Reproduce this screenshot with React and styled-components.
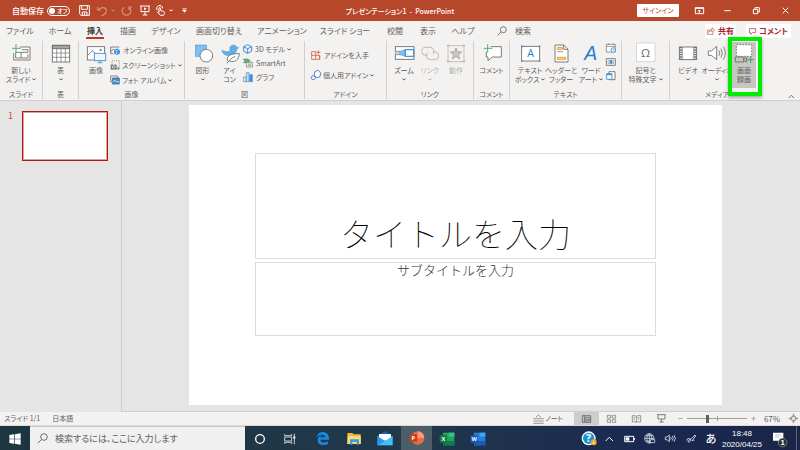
import React from "react";
import styled, { createGlobalStyle, css } from "styled-components";

const GlobalStyle = createGlobalStyle`
  *, *::before, *::after { box-sizing: border-box; }
  body {
    margin: 0;
    font-family: "Noto Sans CJK JP", "Noto Sans", sans-serif;
    font-feature-settings: "palt";
    font-size: 7px;
    line-height: 9px;
    color: #605e5c;
    background: #e5e5e5;
  }
  button, input { font: inherit; font-feature-settings: inherit; color: inherit; }
  button { border: 0; padding: 0; background: none; white-space: nowrap; }
  svg { display: block; flex: none; overflow: visible; }
`;

const Page = styled.div`
  min-height: 100vh;
  display: flex;
  flex-direction: column;
`;

/* ---------- title bar ---------- */
const TitleBar = styled.header`
  display: grid;
  grid-template-columns: 1fr auto 1fr;
  align-items: center;
  height: 21px;
  background: #b7472a;
  color: #fff;
`;
const QuickAccess = styled.div`
  display: flex;
  align-items: center;
  padding-left: 12px;
`;
const AutoSave = styled.label`
  display: flex;
  align-items: center;
  gap: 3px;
  margin-right: 5px;
  font-size: 8px;
  font-weight: 500;
`;
const Pill = styled.span`
  display: flex;
  align-items: center;
  gap: 2px;
  width: 23px;
  height: 10px;
  padding-left: 1px;
  border: 1px solid #fff;
  border-radius: 5px;
  font-size: 6px;
  line-height: 8px;
  white-space: nowrap;
`;
const Knob = styled.input`
  appearance: none;
  flex: none;
  width: 6px;
  height: 6px;
  margin: 0;
  border-radius: 50%;
  background: #fff;
`;
const QuickButton = styled.button`
  display: grid;
  place-items: center;
  width: ${(p) => p.$w}px;
  height: 16px;
  opacity: ${(p) => (p.disabled ? 0.4 : 1)};
  color: #fff;
`;
const DocTitle = styled.h1`
  margin: 0;
  font-size: 7px;
  line-height: 10px;
  font-weight: 500;
`;
const WindowTools = styled.div`
  display: flex;
  align-items: center;
  justify-content: flex-end;
`;
const SignIn = styled.button`
  width: 42px;
  height: 13px;
  margin-right: 6px;
  border-radius: 1px;
  background: #fff;
  color: #b7472a;
`;

/* ---------- ribbon tabs ---------- */
const TabBar = styled.nav`
  display: flex;
  align-items: center;
  height: 20px;
  padding-right: 9px;
  background: #f3f2f1;
  font-size: 8px;
  line-height: 10px;
`;
const Tab = styled.button`
  position: relative;
  width: ${(p) => p.$w}px;
  height: 20px;
  ${(p) =>
    p.$active &&
    css`
      color: #3b3a39;
      font-weight: 700;
      &::after {
        content: "";
        position: absolute;
        left: 6px;
        right: 6px;
        bottom: 2px;
        height: 2px;
        background: #b83a32;
      }
    `}
`;
const TellMe = styled.label`
  display: flex;
  align-items: center;
  gap: 8px;
  flex: 1;
  padding-left: 15px;
`;
const BareInput = styled.input`
  flex: 1;
  min-width: 0;
  padding: 0;
  border: 0;
  outline: 0;
  background: none;
  &::placeholder { color: #605e5c; opacity: 1; }
`;
const ShareButton = styled.button`
  display: flex;
  align-items: center;
  justify-content: center;
  gap: 3px;
  width: ${(p) => p.$w}px;
  height: 14px;
  margin-left: 10px;
  border-radius: 1px;
  background: #fff;
  color: #a4262c;
  font-weight: 700;
`;

/* ---------- ribbon ---------- */
const Ribbon = styled.div`
  display: flex;
  height: 60px;
  background: #f3f2f1;
  border-bottom: 1px solid #d2d0ce;
`;
const Group = styled.section`
  display: flex;
  flex-direction: column;
  flex: none;
  width: ${(p) => p.$w}px;
  height: 58px;
  border-right: 1px solid ${(p) => (p.$last ? "transparent" : "#d2d0ce")};
`;
const GroupBody = styled.div`
  display: flex;
  flex: 1;
  padding: 1px 0 0 ${(p) => p.$pad || 0}px;
  justify-content: ${(p) => (p.$pad ? "flex-start" : "center")};
`;
const GroupLabel = styled.div`
  height: 9px;
  text-align: center;
`;
const BigButton = styled.button`
  position: relative;
  display: flex;
  flex-direction: column;
  align-items: center;
  width: ${(p) => p.$w}px;
  height: 46px;
  padding-top: 1px;
  background: ${(p) => (p.$pressed ? "#c8c6c4" : "none")};
  color: ${(p) => (p.disabled ? "#b5b3b1" : "#605e5c")};
`;
const BigText = styled.span`
  display: flex;
  flex-direction: column;
  align-items: center;
  margin-top: 3px;
`;
const Line = styled.span`
  display: flex;
  align-items: center;
  justify-content: center;
  gap: 2px;
  height: 9px;
`;
const Column = styled.div`
  display: flex;
  flex-direction: column;
  gap: ${(p) => p.$gap}px;
  padding: ${(p) => p.$top}px 0 0 ${(p) => p.$indent || 0}px;
`;
const SmallButton = styled.button`
  display: flex;
  align-items: center;
  gap: ${(p) => (p.$tight ? 2 : 3)}px;
  height: 12px;
`;
const Highlight = styled.span`
  position: absolute;
  z-index: 2;
  inset: -5px -6px -8px -4px;
  border: 4px solid #00ec00;
  box-shadow: 0 2px 3px rgba(0, 0, 0, 0.3);
`;
const Collapse = styled.button`
  align-self: flex-end;
  margin: 0 5px 1px auto;
`;

/* ---------- workspace ---------- */
const Workspace = styled.main`
  display: flex;
  flex: 1;
  background: #e5e5e5;
`;
const Thumbs = styled.aside`
  display: flex;
  align-items: flex-start;
  width: 122px;
  padding: 10px 0 0 8px;
  border-right: 1px solid #cfcfcf;
  color: #c8452f;
  font-size: 9px;
  line-height: 10px;
`;
const Thumb = styled.button`
  width: 86px;
  height: 50px;
  margin-left: 9px;
  border: 1px solid #b01810;
  background: #fff;
  box-shadow: inset 0 0 0 1px #d9a59d;
`;
const Canvas = styled.div`
  flex: 1;
  padding: 4px 78px 6px 67px;
  border-bottom: 1px solid #cfcfcf;
`;
const Slide = styled.article`
  display: grid;
  grid-template-columns: 66fr 401fr 66fr;
  grid-template-rows: 48fr 106fr 3fr 74fr 69fr;
  aspect-ratio: 533 / 300;
  background: #fff;
  font-feature-settings: normal;
  text-align: center;
`;
const Placeholder = styled.div`
  grid-column: 2;
  grid-row: ${(p) => p.$row};
  display: flex;
  justify-content: center;
  align-items: ${(p) => (p.$row === 2 ? "flex-end" : "flex-start")};
  border: 1px solid #dcdcdc;
`;
const SlideTitle = styled.h2`
  margin: 0;
  font-size: 33px;
  line-height: 50px;
  font-weight: 100;
  color: #000;
`;
const SlideSubtitle = styled.p`
  margin: 0;
  font-size: 13px;
  line-height: 14px;
  font-weight: 300;
  color: #333;
`;

/* ---------- status bar ---------- */
const StatusBar = styled.footer`
  display: flex;
  align-items: center;
  height: 14px;
  padding-left: 4px;
  background: #f3f2f1;
  border-bottom: 1px solid #dcdad8;
  font-size: 7px;
`;
const StatusText = styled.span`
  margin-right: 12px;
`;
const Notes = styled.button`
  display: flex;
  align-items: center;
  gap: 1px;
  margin: 0 11px 0 auto;
`;
const ViewButton = styled.button`
  display: grid;
  place-items: center;
  width: 25px;
  height: 13px;
  background: ${(p) => (p.$active ? "#cfcdcb" : "none")};
`;
const FitButton = styled(ViewButton)`
  width: 12px;
  margin-right: 1px;
`;
const ZoomStep = styled.button`
  width: 13px;
  height: 12px;
  font-size: 9px;
  color: #8a8886;
`;
const ZoomRange = styled.input`
  appearance: none;
  width: 60px;
  height: 12px;
  margin: 0;
  background: linear-gradient(#a19f9d, #a19f9d) center / 100% 1px no-repeat,
    linear-gradient(#a19f9d, #a19f9d) center / 1px 5px no-repeat;
  &::-webkit-slider-thumb {
    appearance: none;
    width: 3px;
    height: 8px;
    background: #605e5c;
  }
`;
const ZoomValue = styled.button`
  width: 22px;
  margin: 0 4px 0 1px;
  font-size: 8px;
`;

/* ---------- taskbar ---------- */
const Taskbar = styled.footer`
  display: flex;
  align-items: stretch;
  height: 25px;
  background: linear-gradient(90deg, #1d3540, #20384a 50%, #1b2950 80%, #1a2548);
  color: #fff;
`;
const TaskButton = styled.button`
  display: grid;
  place-items: center;
  width: ${(p) => p.$w || 31}px;
  ${(p) =>
    p.$active &&
    css`
      background: #4b5e69;
      border-bottom: 1px solid #76b9ed;
    `}
`;
const SearchBox = styled.label`
  display: flex;
  align-items: center;
  gap: 7px;
  width: 215px;
  padding-left: 7px;
  background: #f0f0f0;
  border: 1px solid #c4c8ca;
  border-width: 1px 0;
  color: #444;
  font-size: 9px;
  line-height: 12px;
`;
const Tray = styled.div`
  display: flex;
  align-items: stretch;
  margin-left: auto;
`;
const TrayButton = styled.button`
  display: grid;
  place-items: center;
  width: ${(p) => p.$w || 20}px;
  color: #fff;
  font-size: 11px;
  font-weight: 500;
`;
const Clock = styled.time`
  display: flex;
  flex-direction: column;
  align-items: center;
  justify-content: center;
  width: 42px;
  font-family: "Liberation Sans", sans-serif;
  font-size: 8px;
  line-height: 11px;
`;
const Peek = styled.span`
  width: 4px;
  border-left: 1px solid #5a6480;
`;

/* ---------- drawings ---------- */
const G = "#6b6967";
const BLUE = "#3a8fd8";
const GREEN = "#3fa463";

/* Three drawing units make one pixel. */
const Art = ({ w = 20, h = 20, s = G, sw = 2.6, children }) => (
  <svg width={w} height={h} viewBox={`0 0 ${w * 3} ${h * 3}`} fill="none" stroke={s} strokeWidth={sw} aria-hidden="true">
    {children}
  </svg>
);
const Chevron = ({ up, c = "currentColor" }) => (
  <Art w={4} h={3} s={c} sw={3}>
    <path d={up ? "M1 7l5-5 5 5" : "M1 2l5 4 5-4"} />
  </Art>
);

const NewSlideArt = () => (
  <Art>
    <path d="M26 12H57V51H8V30" fill="#fff" />
    <path d="M32 20H51V28H14V45H51V34M30 30V45" />
    <path d="M3 16H30M15 3V29" stroke={GREEN} />
  </Art>
);
const TableArt = () => (
  <Art>
    <rect x="4" y="7" width="52" height="50" fill="#fff" />
    <path d="M4 7H56V17H4Z" fill="#a6a4a2" />
    <path d="M4 30H56M4 43H56M17 17V57M30 17V57M43 17V57" strokeWidth="2" />
  </Art>
);
const PictureArt = () => (
  <Art>
    <rect x="4" y="11" width="52" height="40" fill="#fff" />
    <path d="M4 38L19 23 32 36" />
    <circle cx="44" cy="21" r="3" fill={G} stroke="none" />
    <rect x="25" y="31" width="34" height="22" fill="#eef7ff" stroke={BLUE} />
    <path d="M42 53V59M35 59H49" stroke={BLUE} />
  </Art>
);
const ShapesArt = () => (
  <Art>
    <rect x="7" y="6" width="34" height="34" fill="#83beec" stroke={BLUE} strokeWidth="1.5" />
    <circle cx="40" cy="38" r="19" fill="#fff" />
  </Art>
);
const IconsArt = () => (
  <Art>
    <path d="M6 21C14 27 22 28 31 23 27 15 31 6 40 6 46 6 48 9 49 12L56 14 50 19C49 28 44 37 32 38 17 39 7 33 6 21Z" fill="#62aee8" stroke={BLUE} strokeWidth="1.5" />
    <path d="M23 54C18 39 31 31 58 32 56 50 45 60 28 54L20 60M28 54C33 46 39 43 46 40" fill="#fff" />
  </Art>
);
const ZoomArt = () => (
  <Art>
    <rect x="4" y="11" width="56" height="38" fill="#fff" />
    <path d="M4 25H18V35H4" fill="#b8dcf5" strokeWidth="2" />
    <path d="M18 25L34 20V40L18 35" fill="#83beec" stroke={BLUE} strokeWidth="1.5" />
    <rect x="34" y="20" width="25" height="20" fill="#fff" stroke={BLUE} strokeWidth="3.5" />
  </Art>
);
const LinkArt = () => (
  <Art s="#bcbab8" sw={3}>
    <path d="M22 37H17A12 12 0 0 1 17 13H31A12 12 0 0 1 39 33" />
    <path d="M38 26H44A12 12 0 0 1 44 50H31A12 12 0 0 1 23 29" />
  </Art>
);
const ActionArt = () => (
  <Art s="#bcbab8">
    <rect x="6" y="8" width="48" height="48" />
    <path d="M3 8H10M50 8H57M3 56H10M50 56H57" strokeWidth="5" />
    <path d="M30 15L34.500 26.500 47 27 37 35 41 48 30 40.500 19 48 23 35 13 27 25.500 26.500Z" fill="#c9c7c5" stroke="#a6a4a2" />
  </Art>
);
const CommentArt = () => (
  <Art>
    <path d="M26 11H58V42H31L18 53V42H13V26" fill="#fff" />
    <path d="M5 16H31M17 3V29" stroke={GREEN} />
  </Art>
);
const TextBoxArt = () => (
  <Art>
    <rect x="5" y="10" width="54" height="44" fill="#fff" />
    <path d="M3 10H8M56 10H61M3 54H8M56 54H61" stroke={BLUE} strokeWidth="5" />
    <text x="32" y="43" textAnchor="middle" fontSize="32" fontFamily="Open Sans" fill="#1f7fd0" stroke="none">A</text>
  </Art>
);
const HeaderArt = () => (
  <Art>
    <path d="M12 6H38L51 19V57H12Z" fill="#fff" />
    <path d="M38 6V19H51" />
    <path d="M19 13H34V19H19ZM19 43H44V49H19Z" fill="#ffd9a0" stroke="#e8912d" />
    <path d="M19 26H36" strokeWidth="2" />
  </Art>
);
const WordArtArt = () => (
  <Art>
    <text x="29" y="51" textAnchor="middle" fontSize="58" fontStyle="italic" fontFamily="Liberation Sans" fill="#1f7fd0" stroke="none">A</text>
  </Art>
);
const OmegaArt = () => (
  <Art>
    <rect x="1" y="0" width="56" height="56" fill="#fff" stroke="#c8c6c4" strokeWidth="2" />
    <text x="29" y="41" textAnchor="middle" fontSize="35" fontFamily="Open Sans" fill={G} stroke="none">Ω</text>
  </Art>
);
const VideoArt = () => (
  <Art>
    <rect x="4" y="12" width="52" height="38" fill="#fff" />
    <path d="M8 12V50M52 12V50" strokeWidth="7" strokeDasharray="4 3" />
    <path d="M13 12V50M47 12V50" strokeWidth="2" />
  </Art>
);
const AudioArt = () => (
  <Art>
    <path d="M4 24H13L29 10V50L13 37H4Z" fill="#fff" />
    <path d="M36 23Q41 30 36 38M42 17Q50 30 42 44M49 11Q61 30 49 50" strokeWidth="2.500" />
  </Art>
);
const RecordArt = () => (
  <Art>
    <rect x="7" y="5" width="46" height="35" fill="#fff" strokeDasharray="5 4" />
    <path d="M4 42H29V57H4ZM29 48L38 43V57L29 52" fill="#c8c6c4" />
    <path d="M40 50H60M50 40V60" stroke={GREEN} strokeWidth="3" />
  </Art>
);

const OnlinePicArt = () => (
  <Art w={10} h={10}>
    <path d="M2 6V26H10M2 6H28M2 20L10 13 16 19M22 11h1" strokeWidth="2.500" />
    <circle cx="21" cy="20" r="9" fill="#3a8fd8" stroke="none" />
    <path d="M16 17h6l4-4M20 20v7" stroke="#fff" strokeWidth="2" />
  </Art>
);
const ScreenshotArt = () => (
  <Art w={10} h={10}>
    <path d="M6 14V2H28V20" strokeDasharray="3 3" strokeWidth="2" />
    <path d="M2 14H20V29H2Z" fill="#777" stroke="none" />
    <circle cx="11" cy="21" r="4" stroke="#fff" strokeWidth="2" />
    <path d="M20 25H30M25 20V30" stroke={GREEN} />
  </Art>
);
const AlbumArt = () => (
  <Art w={10} h={10}>
    <path d="M2 3H22V20H2Z" fill="#fff" />
    <path d="M7 9H28V27H7Z" fill="#3a8fd8" stroke="#51708c" />
    <path d="M8 22L14 15 20 22 24 18 28 23" stroke="#fff" strokeWidth="2" />
  </Art>
);
const CubeArt = () => (
  <Art w={10} h={10} s="#2f7dc9">
    <path d="M14 2L26 8V22L14 28 2 22V8ZM2 8L14 14 26 8M14 14V28" fill="#e5f2fc" />
  </Art>
);
const SmartArtArt = () => (
  <Art w={10} h={10}>
    <path d="M1 3H16L22 9 16 14H1L6 9Z" fill="#5fb37c" stroke={GREEN} strokeWidth="2" />
    <path d="M10 13H28V27H10ZM14 18H25M14 22H25" fill="#fff" strokeWidth="2" />
  </Art>
);
const ChartArt = () => (
  <Art w={10} h={10}>
    <path d="M2 15H9V29H2Z" fill="#fff" strokeWidth="2" />
    <path d="M10 2H18V29H10Z" fill="#bfe0f7" stroke={BLUE} strokeWidth="2" />
    <path d="M20 8H28V29H20Z" fill={BLUE} stroke={BLUE} strokeWidth="2" />
  </Art>
);
const StoreArt = () => (
  <Art w={10} h={10} s="#d9644f">
    <path d="M2 5H14V28H2ZM2 16H26V28H14M22 1V13M16 7H28M26 16V28" />
  </Art>
);
const MyAddinArt = () => (
  <Art w={10} h={10} s="#3778bf">
    <path d="M12 4L22 1 29 9 27 20 18 23 9 17Z" fill="#fff" />
    <circle cx="7" cy="23" r="6" fill="#fff" />
  </Art>
);
const DateArt = () => (
  <Art w={10} h={10}>
    <path d="M1 4H28V27H1ZM1 10H28M7 1V6M22 1V6" fill="#fff" strokeWidth="2" />
    <circle cx="22" cy="21" r="7" fill="#fff" stroke={BLUE} />
    <path d="M22 17V22H25" stroke={BLUE} strokeWidth="2" />
  </Art>
);
const SlideNoArt = () => (
  <Art w={10} h={10}>
    <path d="M1 5H28V25H1Z" fill="#fff" />
    <path d="M6 10H23V20H6Z" strokeWidth="1.500" />
    <circle cx="15" cy="15" r="5" fill={BLUE} stroke="none" />
  </Art>
);
const ObjectArt = () => (
  <Art w={10} h={10}>
    <path d="M9 2H27V26H9Z" fill="#fff" />
    <path d="M2 9H18V25H2Z" fill="#fff" stroke={BLUE} />
    <path d="M2 10H18" stroke={BLUE} strokeWidth="5" />
  </Art>
);
const Magnifier = ({ w = 10 }) => (
  <svg width={w} height={w} viewBox="0 0 30 30" fill="none" stroke="#605e5c" strokeWidth="2.500" aria-hidden="true">
    <circle cx="19" cy="11" r="9" />
    <path d="M12 18L2 28" />
  </svg>
);

/* ---------- pieces ---------- */
function Big({ w = 26, art, lines, arrow, disabled, pressed, children }) {
  return (
    <BigButton $w={w} disabled={disabled} $pressed={pressed}>
      {art}
      <BigText>
        {lines.map((t, i) => (
          <Line key={t}>
            {t}
            {arrow === "inline" && i === lines.length - 1 && <Chevron />}
          </Line>
        ))}
        {arrow === "below" && (
          <Line>
            <Chevron />
          </Line>
        )}
      </BigText>
      {children}
    </BigButton>
  );
}
function Small({ art, text, label, arrow }) {
  return (
    <SmallButton aria-label={label || text} $tight={arrow}>
      {art}
      {text}
      {arrow && <Chevron />}
    </SmallButton>
  );
}
function RibbonGroup({ w, pad, label, name, last, children }) {
  return (
    <Group $w={w} $last={last} aria-label={name || label}>
      <GroupBody $pad={pad}>{children}</GroupBody>
      <GroupLabel>{label}</GroupLabel>
    </Group>
  );
}

const TABS = [
  ["ファイル", 40],
  ["ホーム", 40],
  ["挿入", 30],
  ["描画", 36],
  ["デザイン", 40],
  ["画面切り替え", 66],
  ["アニメーション", 60],
  ["スライド ショー", 66],
  ["校閲", 34],
  ["表示", 32],
  ["ヘルプ", 38],
];

function Title() {
  return (
    <TitleBar>
      <QuickAccess>
        <AutoSave>
          自動保存
          <Pill>
            <Knob type="checkbox" aria-label="自動保存" />
            オフ
          </Pill>
        </AutoSave>
        <QuickButton $w={18} aria-label="保存">
          <Art w={11} h={11} s="#fff" sw={3}>
            <path d="M2 2H31V31H6L2 27ZM8 2V13H25V2M10 31V21H24V31M17 23V31" />
          </Art>
        </QuickButton>
        <QuickButton $w={17} disabled aria-label="元に戻す">
          <Art w={10} h={10} s="#fff" sw={3.5}>
            <path d="M2 2V12H12M3 12C12 1 28 3 28 14 28 22 20 27 13 30" />
          </Art>
        </QuickButton>
        <QuickButton $w={6} disabled aria-label="元に戻すの一覧">
          <Chevron />
        </QuickButton>
        <QuickButton $w={20} disabled aria-label="繰り返し">
          <Art w={11} h={10} s="#fff" sw={3.5}>
            <path d="M9 4A13 13 0 1 0 24 4M24 12V3H33" />
          </Art>
        </QuickButton>
        <QuickButton $w={17} aria-label="スライド ショー">
          <Art w={10} h={11} s="#fff" sw={3}>
            <path d="M0 3H30M3 3V20H27V3M15 20V30M8 30H22" />
            <path d="M12 7V16L20 11Z" fill="#fff" stroke="none" />
          </Art>
        </QuickButton>
        <QuickButton $w={15} aria-label="タッチ">
          <Art w={9} h={11} s="#fff" sw={3}>
            <path d="M4 16A9 9 0 1 1 20 10M9 23V9Q12 5 14 9V17L23 19Q27 21 25 26L22 31H13L5 22Q6 18 9 21" />
          </Art>
        </QuickButton>
        <QuickButton $w={6} aria-label="タッチの一覧">
          <Chevron />
        </QuickButton>
        <QuickButton $w={20} aria-label="カスタマイズ">
          <Art w={5} h={5} s="#fff" sw={2}>
            <path d="M1 2H14" />
            <path d="M2 6H13L7.500 13Z" fill="#fff" />
          </Art>
        </QuickButton>
      </QuickAccess>
      <DocTitle>プレゼンテーション1&nbsp; - &nbsp;PowerPoint</DocTitle>
      <WindowTools>
        <SignIn>サインイン</SignIn>
        <QuickButton $w={28} aria-label="リボンの表示">
          <Art w={9} h={7} s="#fff" sw={3}>
            <path d="M1 2H26V20H1ZM1 4H26M13 18V9M9 13L13 9 17 13" />
          </Art>
        </QuickButton>
        <QuickButton $w={29} aria-label="最小化">
          <Art w={7} h={7} s="#fff" sw={3}>
            <path d="M1 11H20" />
          </Art>
        </QuickButton>
        <QuickButton $w={29} aria-label="元のサイズ">
          <Art w={7} h={7} s="#fff" sw={3}>
            <path d="M1 7H14V20H1ZM6 7V2H19V15H14" />
          </Art>
        </QuickButton>
        <QuickButton $w={29} aria-label="閉じる">
          <Art w={7} h={7} s="#fff" sw={3}>
            <path d="M2 2L19 19M19 2L2 19" />
          </Art>
        </QuickButton>
      </WindowTools>
    </TitleBar>
  );
}

function RibbonTabs() {
  return (
    <TabBar>
      {TABS.map(([t, w]) => (
        <Tab key={t} $w={w} $active={t === "挿入"}>
          {t}
        </Tab>
      ))}
      <TellMe>
        <Magnifier />
        <BareInput aria-label="検索" placeholder="検索" />
      </TellMe>
      <ShareButton $w={31}>
        <Art w={8} h={8} s="#b8524d" sw={2}>
          <path d="M7 9H1V22H18V15M5 16Q7 8 15 7V2L23 9 15 15V11Q9 11 5 16Z" />
        </Art>
        共有
      </ShareButton>
      <ShareButton $w={45}>
        <Art w={7} h={7} s="#a4262c" sw={2}>
          <path d="M1 2H20V14H10L5 19V14H1Z" />
        </Art>
        コメント
      </ShareButton>
    </TabBar>
  );
}

function InsertRibbon() {
  return (
    <Ribbon>
      <RibbonGroup w={43} label="スライド">
        <Big w={40} art={<NewSlideArt />} lines={["新しい", "スライド"]} arrow="inline" />
      </RibbonGroup>
      <RibbonGroup w={36} label="表">
        <Big art={<TableArt />} lines={["表"]} arrow="below" />
      </RibbonGroup>
      <RibbonGroup w={106} pad={4} label="画像">
        <Big art={<PictureArt />} lines={["画像"]} />
        <Column $gap={3} $top={2} $indent={1}>
          <Small art={<OnlinePicArt />} text="オンライン画像" />
          <Small art={<ScreenshotArt />} text="スクリーンショット" arrow />
          <Small art={<AlbumArt />} text="フォト アルバム" arrow />
        </Column>
      </RibbonGroup>
      <RibbonGroup w={120} pad={4} label="図">
        <Big w={27} art={<ShapesArt />} lines={["図形"]} arrow="below" />
        <Big w={27} art={<IconsArt />} lines={["アイ", "コン"]} />
        <Column $gap={2} $top={1}>
          <Small art={<CubeArt />} text="3D モデル" arrow />
          <Small art={<SmartArtArt />} text="SmartArt" />
          <Small art={<ChartArt />} text="グラフ" />
        </Column>
      </RibbonGroup>
      <RibbonGroup w={82} pad={6} label="アドイン">
        <Column $gap={8} $top={7}>
          <Small art={<StoreArt />} text="アドインを入手" />
          <Small art={<MyAddinArt />} text="個人用アドイン" arrow />
        </Column>
      </RibbonGroup>
      <RibbonGroup w={87} pad={4} label="リンク">
        <Big art={<ZoomArt />} lines={["ズーム"]} arrow="below" />
        <Big art={<LinkArt />} lines={["リンク"]} arrow="below" disabled />
        <Big art={<ActionArt />} lines={["動作"]} disabled />
      </RibbonGroup>
      <RibbonGroup w={36} label="コメント">
        <Big art={<CommentArt />} lines={["コメント"]} />
      </RibbonGroup>
      <RibbonGroup w={112} pad={4} label="テキスト">
        <Big w={32} art={<TextBoxArt />} lines={["テキスト", "ボックス"]} arrow="inline" />
        <Big w={30} art={<HeaderArt />} lines={["ヘッダーと", "フッター"]} />
        <Big w={30} art={<WordArtArt />} lines={["ワード", "アート"]} arrow="inline" />
        <Column $gap={2} $top={0}>
          <Small art={<DateArt />} label="日付と時刻" />
          <Small art={<SlideNoArt />} label="スライド番号" />
          <Small art={<ObjectArt />} label="オブジェクト" />
        </Column>
      </RibbonGroup>
      <RibbonGroup w={48} name="記号と特殊文字">
        <Big w={44} art={<OmegaArt />} lines={["記号と", "特殊文字"]} arrow="inline" />
      </RibbonGroup>
      <RibbonGroup w={95} pad={4} label="メディア" last>
        <Big w={28} art={<VideoArt />} lines={["ビデオ"]} arrow="below" />
        <Big w={30} art={<AudioArt />} lines={["オーディオ"]} arrow="below" />
        <Big w={24} art={<RecordArt />} lines={["画面", "録画"]} pressed>
          <Highlight />
        </Big>
      </RibbonGroup>
      <Collapse aria-label="リボンを折りたたむ">
        <Art w={7} h={5} sw={3}>
          <path d="M2 12L10 4 18 12" />
        </Art>
      </Collapse>
    </Ribbon>
  );
}

function Status() {
  return (
    <StatusBar>
      <StatusText>スライド 1/1</StatusText>
      <StatusText>日本語</StatusText>
      <Notes>
        <Art w={11} h={10}>
          <path d="M1 14H32M1 21H32M1 28H32M9 9L16 3 24 9" strokeWidth="2" />
        </Art>
        ノート
      </Notes>
      <ViewButton $active aria-label="標準">
        <Art w={9} h={8}>
          <path d="M1 2H26V22H1ZM7 2V22M11 7H22V14H11ZM7 18H26" />
        </Art>
      </ViewButton>
      <ViewButton aria-label="スライド一覧">
        <Art w={9} h={8}>
          <path d="M1 1H11V9H1ZM16 1H26V9H16ZM1 14H11V22H1ZM16 14H26V22H16Z" strokeWidth="2" />
        </Art>
      </ViewButton>
      <ViewButton aria-label="閲覧表示">
        <Art w={9} h={8}>
          <path d="M13 4Q8 0 1 2V21Q8 19 13 22 18 19 26 21V2Q18 0 13 4V22M5 7H9M5 12H9M17 7H22M17 12H22" strokeWidth="2" />
        </Art>
      </ViewButton>
      <ViewButton aria-label="スライド ショー">
        <Art w={9} h={9}>
          <path d="M0 2H26M3 2V15H24V2M13 15V24M7 24H20" />
        </Art>
      </ViewButton>
      <ZoomStep>−</ZoomStep>
      <ZoomRange type="range" min="0" max="200" defaultValue="67" aria-label="ズーム" />
      <ZoomStep>+</ZoomStep>
      <ZoomValue>67%</ZoomValue>
      <FitButton aria-label="ウィンドウに合わせる">
        <Art w={9} h={9}>
          <path d="M8 8H19V19H8ZM13.500 1V8M13.500 19V26M1 13.500H8M19 13.500H26M10 4L13.500 1 17 4M10 23L13.500 26 17 23M4 10L1 13.500 4 17M23 10L26 13.500 23 17" strokeWidth="2" />
        </Art>
      </FitButton>
    </StatusBar>
  );
}

const OfficeArt = ({ a, b, c, letter, round }) => (
  <Art w={16} h={14} s="none">
    {round ? (
      <>
        <circle cx="26" cy="21" r="20" fill={a} />
        <path d="M26 1A20 20 0 0 1 46 21H26Z" fill={b} />
      </>
    ) : (
      <>
        <path d="M12 2H46V40H12Z" fill={a} />
        <path d="M29 2H46V14H29Z" fill={b} />
        <path d="M12 27H46V40H12Z" fill={c} />
      </>
    )}
    <rect x="2" y="10" width="22" height="22" rx="2" fill={c} />
    <text x="13" y="27" textAnchor="middle" fontSize="17" fontWeight="700" fontFamily="Open Sans" fill="#fff">{letter}</text>
  </Art>
);

function WindowsTaskbar() {
  return (
    <Taskbar>
      <TaskButton $w={30} aria-label="スタート">
        <Art w={12} h={12} s="none">
          <path d="M1 6L15 4V17H1ZM17 4L35 1V17H17ZM1 19H15V32L1 30ZM17 19H35V35L17 32Z" fill="#fff" />
        </Art>
      </TaskButton>
      <SearchBox>
        <Magnifier w={11} />
        <BareInput aria-label="検索" placeholder="検索するには、ここに入力します" />
      </SearchBox>
      <TaskButton $w={30} aria-label="Cortana">
        <Art w={12} h={12} s="#fff" sw={4}>
          <circle cx="18" cy="18" r="13" />
        </Art>
      </TaskButton>
      <TaskButton $w={30} aria-label="タスク ビュー">
        <Art w={12} h={12} s="#e8eaec" sw={2.5}>
          <path d="M2 3V8H23V3M2 33V28H23V33M2 12H23V24H2ZM31 2V34" />
          <path d="M31 10V17" strokeWidth="6" />
        </Art>
      </TaskButton>
      <TaskButton $w={34} aria-label="Edge">
        <Art w={13} h={13} s="none">
          <path d="M1 18C3 5 12 0 21 0 32 0 39 9 39 18V23H13C14 32 27 34 36 28V36C23 43 4 39 5 23 6 14 12 9 19 8 8 8 3 13 1 18ZM13 16H27C27 6 14 6 13 16Z" fill="#1689e0" fillRule="evenodd" />
        </Art>
      </TaskButton>
      <TaskButton $w={30} aria-label="エクスプローラー">
        <Art w={14} h={13} s="none">
          <path d="M1 3H16L20 7H41V36H1Z" fill="#f3b93b" />
          <path d="M3 12H41V36H1Z" fill="#ffdc73" />
          <path d="M9 22H36V38H29V30H16V38H9Z" fill="#3d9be2" />
        </Art>
      </TaskButton>
      <TaskButton $w={32} aria-label="メール">
        <Art w={16} h={15} s="none">
          <path d="M1 15L24 1 47 15V43H1Z" fill="#1664b5" />
          <path d="M6 9H42V29H6Z" fill="#fff" />
          <path d="M1 15L24 30 1 43Z" fill="#2797e7" />
          <path d="M47 15L24 30 1 43H47Z" fill="#48bdf5" />
        </Art>
      </TaskButton>
      <TaskButton $active aria-label="PowerPoint">
        <OfficeArt round a="#e96a45" b="#ff9a78" c="#c43e1c" letter="P" />
      </TaskButton>
      <TaskButton $w={30} aria-label="Excel">
        <OfficeArt a="#21a366" b="#35c481" c="#107c41" letter="X" />
      </TaskButton>
      <TaskButton aria-label="Word">
        <OfficeArt a="#2b7cd3" b="#41a5ee" c="#185abd" letter="W" />
      </TaskButton>
      <Tray>
        <TrayButton aria-label="ヘルプ">
          <Art w={16} h={15} s="none">
            <circle cx="23" cy="22" r="21" fill="#fff" />
            <circle cx="23" cy="22" r="17" fill="#1593d2" />
            <text x="23" y="34" textAnchor="middle" fontSize="32" fontWeight="700" fontFamily="Open Sans" fill="#fff">?</text>
            <circle cx="38" cy="34" r="9" fill="#f5a623" />
            <path d="M38 29V31M38 33V39" stroke="#fff" strokeWidth="3" />
          </Art>
        </TrayButton>
        <TrayButton aria-label="隠れているインジケーター">
          <Art w={9} h={6} s="#fff" sw={3}>
            <path d="M2 15L13 4 24 15" />
          </Art>
        </TrayButton>
        <TrayButton aria-label="バッテリー">
          <Art w={11} h={6} s="#fff" sw={3}>
            <path d="M2 1H29V17H2ZM31 6V12" />
            <path d="M5 4H16V14H5Z" fill="#fff" stroke="none" />
          </Art>
        </TrayButton>
        <TrayButton $w={21} aria-label="ネットワーク">
          <Art w={11} h={11} s="#e8eaf0" sw={2.2}>
            <circle cx="16" cy="16" r="14" />
            <path d="M2 16H30M16 2V30M5 8H27M5 24H27M16 2C6 10 6 22 16 30C26 22 26 10 16 2" />
            <path d="M19 20H32V29H19Z" fill="#1b2950" />
          </Art>
        </TrayButton>
        <TrayButton $w={21} aria-label="音量">
          <Art w={11} h={9} s="#fff" sw={2.2}>
            <path d="M1 9H6L13 3V23L6 17H1ZM17 9Q20 13 17 17M22 6Q27 13 22 20M27 3Q35 13 27 23" />
          </Art>
        </TrayButton>
        <TrayButton aria-label="ペン">
          <Art w={10} h={10} s="#e8eaf0" sw={2.5}>
            <path d="M3 20C1 13 10 12 13 16 16 21 9 27 6 23 5 19 16 15 20 10L27 3 29 6 18 20Q22 17 25 20" />
          </Art>
        </TrayButton>
        <TrayButton>あ</TrayButton>
        <Clock>
          <span>18:48</span>
          <span>2020/04/25</span>
        </Clock>
        <TrayButton $w={33} aria-label="通知">
          <Art w={15} h={16} s="none">
            <path d="M3 5H34V29H25L18 36V29H3Z" fill="#fff" />
            <path d="M9 12H28M9 18H22" stroke="#9aa0b0" strokeWidth="2" />
            <circle cx="32" cy="35" r="13" fill="#2b2e38" stroke="#8b8f99" strokeWidth="2" />
            <text x="32" y="43" textAnchor="middle" fontSize="23" fontWeight="700" fontFamily="Liberation Sans" fill="#fff">1</text>
          </Art>
        </TrayButton>
        <Peek />
      </Tray>
    </Taskbar>
  );
}

export default function App() {
  return (
    <Page lang="ja">
      <GlobalStyle />
      <Title />
      <RibbonTabs />
      <InsertRibbon />
      <Workspace>
        <Thumbs>
          1
          <Thumb aria-label="スライド 1" />
        </Thumbs>
        <Canvas>
          <Slide>
            <Placeholder $row={2}>
              <SlideTitle>タイトルを入力</SlideTitle>
            </Placeholder>
            <Placeholder $row={4}>
              <SlideSubtitle>サブタイトルを入力</SlideSubtitle>
            </Placeholder>
          </Slide>
        </Canvas>
      </Workspace>
      <Status />
      <WindowsTaskbar />
    </Page>
  );
}
